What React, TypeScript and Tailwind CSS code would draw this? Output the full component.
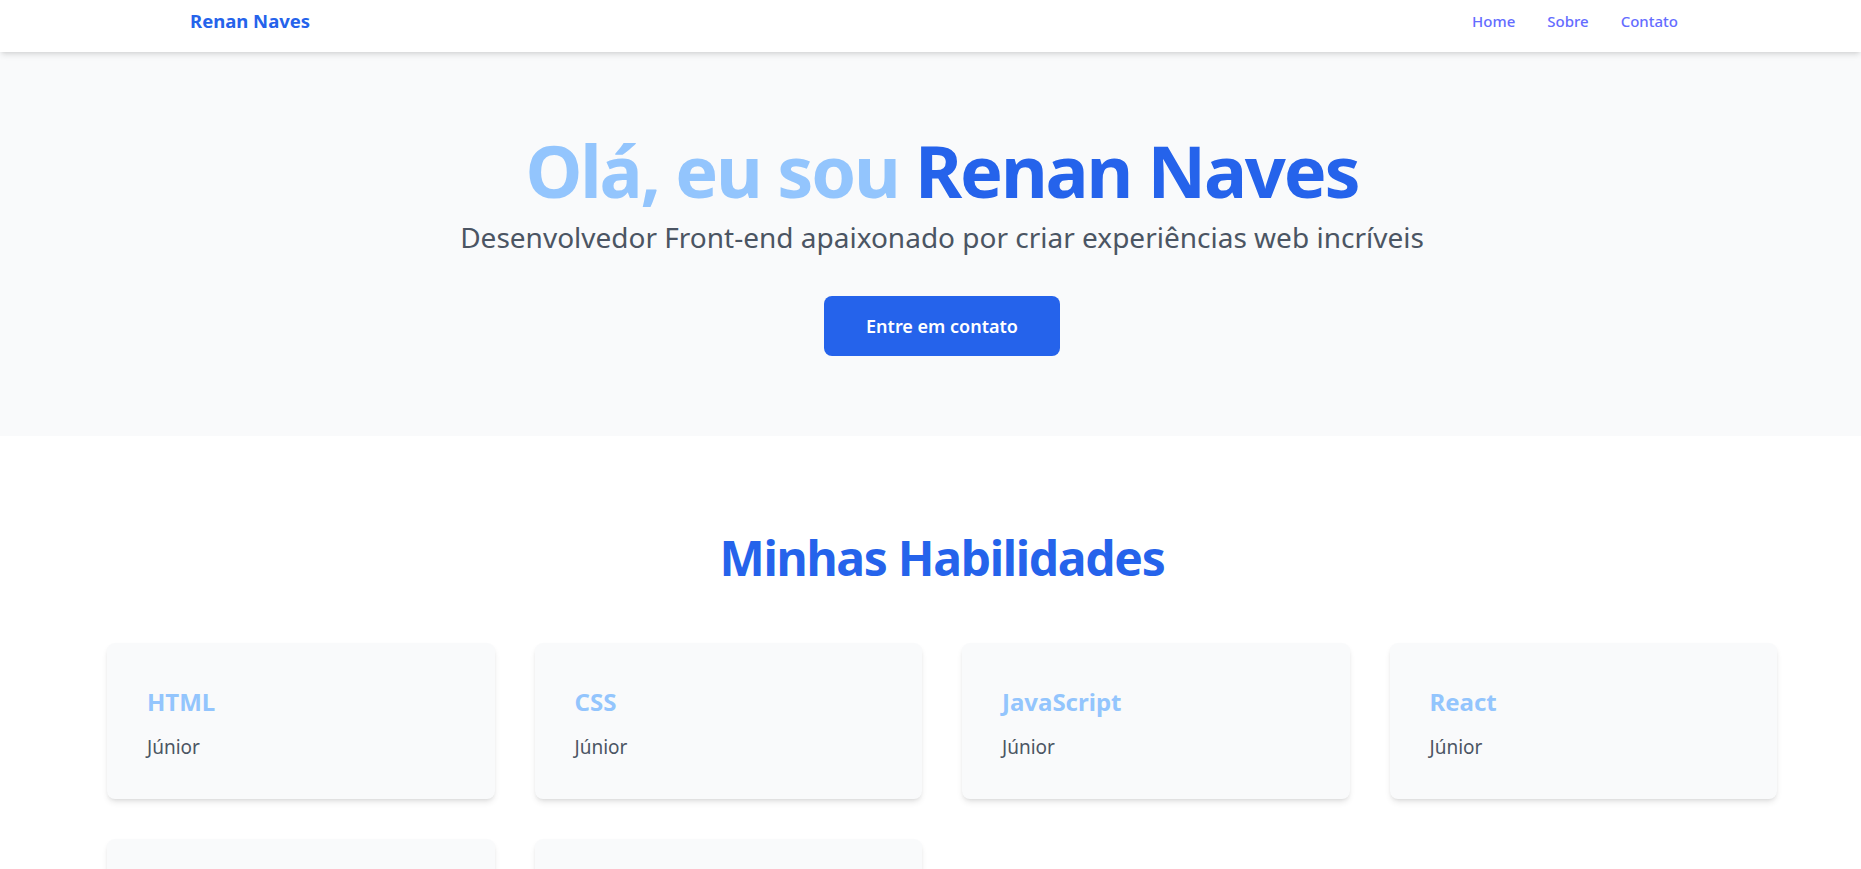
import React from "react";

const skills = [
  { name: "HTML", level: "Júnior" },
  { name: "CSS", level: "Júnior" },
  { name: "JavaScript", level: "Júnior" },
  { name: "React", level: "Júnior" },
  { name: "TypeScript", level: "Júnior" },
  { name: "Git", level: "Júnior" },
];

function Header() {
  return (
    <header className="relative z-10 h-[52px] bg-white shadow-md">
      <div className="flex items-center justify-between pl-[190px] pr-[183px] pt-[7px]">
        <a href="#" className="text-[18.5px] font-bold leading-7 text-[#2563eb]">
          Renan Naves
        </a>
        <nav className="flex items-center gap-8 text-[15px] font-medium text-[#646cff]">
          <a href="#home">Home</a>
          <a href="#sobre">Sobre</a>
          <a href="#contato">Contato</a>
        </nav>
      </div>
    </header>
  );
}

function Hero() {
  return (
    <section id="home" className="bg-[#f9fafb] pb-20 pt-[82px] pl-[23px] text-center">
      <h1 className="text-7xl font-bold leading-none tracking-[-2.2px] text-[#93c5fd]">
        Olá, eu sou <span className="text-[#2563eb]">Renan Naves</span>
      </h1>
      <p className="mt-[10px] text-[28px] leading-[42px] text-[#4b5563]">
        Desenvolvedor Front-end apaixonado por criar experiências web incríveis
      </p>
      <a
        href="#contato"
        className="mt-[38px] inline-block rounded-lg bg-[#2563eb] px-[42px] py-4 text-lg font-semibold leading-7 text-white"
      >
        Entre em contato
      </a>
    </section>
  );
}

function Skills() {
  return (
    <section id="sobre" className="bg-white pb-20 pt-[98px]">
      <h2 className="mb-[61px] pl-[23px] text-center text-5xl font-bold leading-none tracking-[-1.3px] text-[#2563eb]">
        Minhas Habilidades
      </h2>
      <div className="ml-[107px] grid w-[1670px] grid-cols-4 gap-10">
        {skills.map((s) => (
          <div key={s.name} className="h-[156px] rounded-lg bg-[#f9fafb] px-10 pt-[43px] shadow-md">
            <h3 className="text-2xl font-bold leading-8 text-[#93c5fd]">{s.name}</h3>
            <p className="mt-[15px] text-[19px] leading-7 text-[#4b5563]">{s.level}</p>
          </div>
        ))}
      </div>
    </section>
  );
}

export default function App() {
  return (
    <div className="min-h-screen overflow-x-hidden bg-white font-['Noto_Sans',sans-serif]">
      <Header />
      <Hero />
      <Skills />
    </div>
  );
}
